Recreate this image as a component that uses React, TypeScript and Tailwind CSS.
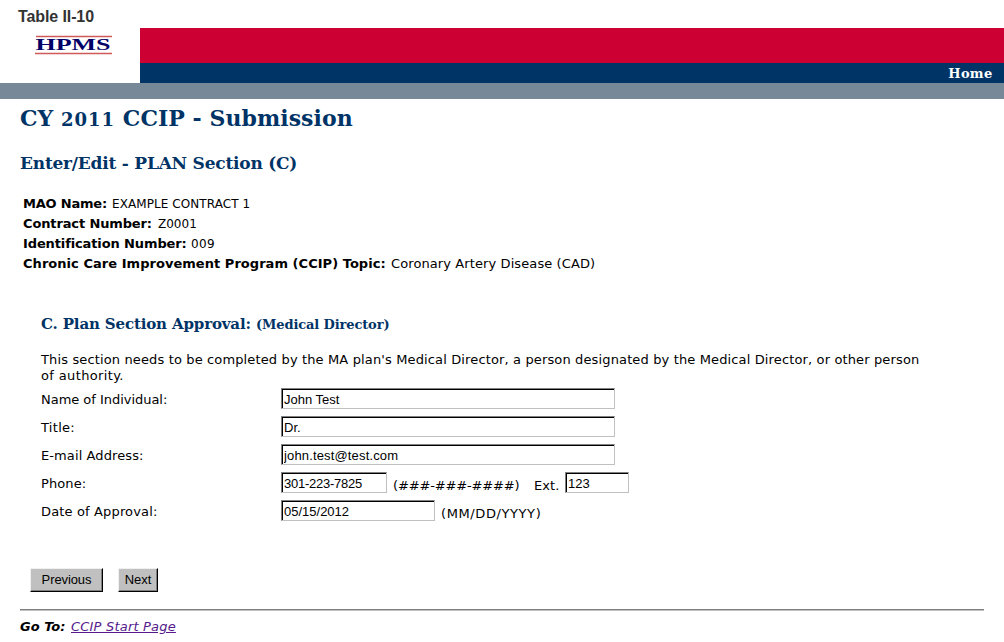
import React from "react";

const details = [
  { label: "MAO Name:", value: "EXAMPLE CONTRACT 1", labelClass: "w-[84px] tracking-[-0.2px]", valueClass: "ml-[5px] text-xs leading-5 tracking-[0.08px]" },
  { label: "Contract Number:", value: "Z0001", labelClass: "w-[130px] tracking-[-0.13px]", valueClass: "ml-[5px] text-xs leading-5" },
  { label: "Identification Number:", value: "009", labelClass: "w-[163px] tracking-[-0.12px]", valueClass: "ml-[5px] text-xs leading-5 tracking-[0.4px]" },
  { label: "Chronic Care Improvement Program (CCIP) Topic:", value: "Coronary Artery Disease (CAD)", labelClass: "w-[363px] tracking-[0.04px]", valueClass: "ml-[5px] tracking-[0.1px]" },
];

const Logo = () => (
  <svg width="78" height="20" viewBox="0 0 78 20">
    <path d="M1 1.5H77M0 18.5H77" stroke="#cf5a5a" strokeWidth="1.6" />
    <text
      x="0.5"
      y="15"
      textLength="75"
      lengthAdjust="spacingAndGlyphs"
      fontFamily="Liberation Serif, serif"
      fontWeight="bold"
      fontSize="16"
      fill="#000066"
    >
      HPMS
    </text>
  </svg>
);

const Field = ({ value, className }: { value: string; className: string }) => (
  <input
    type="text"
    defaultValue={value}
    className={`h-[21px] border border-t-[#808080] border-r-[#c0c0c0] border-b-[#c0c0c0] border-l-[#808080] bg-white px-0.5 pt-0.5 font-['Liberation_Sans',sans-serif] text-[13px] leading-4 text-black shadow-[inset_1px_1px_0_#000] outline-none ${className}`}
  />
);

const Row = ({ label, labelClass, children }: { label: string; labelClass: string; children: React.ReactNode }) => (
  <div className="flex h-7 items-start">
    <label className={`w-60 pt-1 leading-4 ${labelClass}`}>{label}</label>
    {children}
  </div>
);

const Button = ({ children, className }: { children: string; className: string }) => (
  <button
    className={`h-6 border border-t-[#f0f0f0] border-r-black border-b-black border-l-[#f0f0f0] bg-[#c0c0c0] font-['Liberation_Sans',sans-serif] text-[13px] leading-5 tracking-[-0.1px] shadow-[inset_-1px_-1px_0_#808080] ${className}`}
  >
    {children}
  </button>
);

const App = () => {
  return (
    <div className="h-[642px] w-[1004px] overflow-hidden bg-white font-['DejaVu_Sans',sans-serif] text-[13px] text-black">
      <div className="h-7 pt-2 pl-[18px] font-['Liberation_Sans',sans-serif] text-base leading-[18px] font-bold tracking-[-0.1px] text-[#333333]">
        Table II-10
      </div>
      <header className="flex h-[55px]">
        <div className="w-[140px] pt-[7px] pl-[35px]">
          <Logo />
        </div>
        <div className="flex-1 bg-[#003366]">
          <div className="h-[35px] bg-[#cc0033]" />
          <div className="flex h-5 items-center justify-end pt-0.5 pr-[11.5px] font-['DejaVu_Serif',serif] text-[13px] font-bold tracking-[0.3px] text-white">
            Home
          </div>
        </div>
      </header>
      <div className="h-4 bg-[#778899]" />

      <main>
        <div className="pl-5 font-['DejaVu_Serif',serif] font-bold text-[#003366]">
          <h1 className="h-[51px] pt-1 text-[22px] leading-[30px] tracking-[0.05px] whitespace-nowrap">
            CY <span className="text-[18px] tracking-[1px]">2011</span> CCIP - Submission
          </h1>
          <h2 className="h-[44px] text-[17px] leading-[26px] tracking-[-0.22px] whitespace-nowrap">
            Enter/Edit - PLAN Section (C)
          </h2>
        </div>

        <div className="pl-[23px] leading-5 whitespace-nowrap">
          {details.map((item) => (
            <div key={item.label} className="flex h-5">
              <b className={item.labelClass}>{item.label}</b>
              <span className={item.valueClass}>{item.value}</span>
            </div>
          ))}
        </div>

        <section className="pl-[41px]">
          <h3 className="mt-[40px] h-[38px] font-['DejaVu_Serif',serif] text-[15px] leading-5 font-bold tracking-[-0.14px] whitespace-nowrap text-[#003366]">
            C. Plan Section Approval: <span className="text-[13px] tracking-[-0.12px]">(Medical Director)</span>
          </h3>
          <p className="h-9 leading-4 tracking-[0.137px] whitespace-nowrap">
            This section needs to be completed by the MA plan's Medical Director, a person designated by the Medical Director, or other person
            <br />
            <span className="tracking-[0.36px]">of authority.</span>
          </p>
          <Row label="Name of Individual:" labelClass="tracking-[-0.03px]">
            <Field value="John Test" className="w-[334px]" />
          </Row>
          <Row label="Title:" labelClass="tracking-[0.3px]">
            <Field value="Dr." className="w-[334px]" />
          </Row>
          <Row label="E-mail Address:" labelClass="tracking-[0.1px]">
            <Field value="john.test@test.com" className="w-[334px] tracking-[0.15px]" />
          </Row>
          <Row label="Phone:" labelClass="tracking-[0.1px]">
            <Field value="301-223-7825" className="w-[106px] tracking-[-0.25px]" />
            <span className="w-[147px] pt-1.5 pl-[6px] leading-4 tracking-[-0.15px]">(###-###-####)</span>
            <span className="w-[31px] pt-1.5 leading-4 tracking-[0.1px]">Ext.</span>
            <Field value="123" className="w-[64px]" />
          </Row>
          <Row label="Date of Approval:" labelClass="tracking-[0.15px]">
            <Field value="05/15/2012" className="w-[154px]" />
            <span className="pt-1.5 pl-[6px] leading-4 tracking-[0.6px]">(MM/DD/YYYY)</span>
          </Row>
        </section>

        <div className="mt-10 flex gap-[15px] pl-[30px]">
          <Button className="w-[73px]">Previous</Button>
          <Button className="w-[40px]">Next</Button>
        </div>

        <div className="mt-[17px] mr-5 ml-5 border-t border-b border-t-[#808080] border-b-[#c0c0c0]" />
        <div className="mt-[7px] flex pl-5 leading-[18px] italic">
          <b className="w-[51px]">Go To:</b>
          <a href="#" className="tracking-[0.2px] text-[#551a8b] underline">
            CCIP Start Page
          </a>
        </div>
      </main>
    </div>
  );
};

export default App;
